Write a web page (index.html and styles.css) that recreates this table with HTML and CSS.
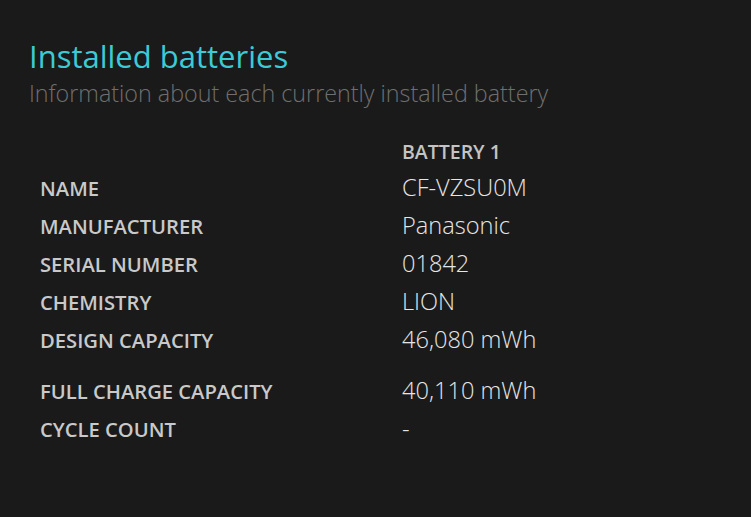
FILE: index.html
```html
<!DOCTYPE html>
<html>
<head>
<meta charset="utf-8">
<link rel="stylesheet" href="styles.css">
</head>
<body>
<div class="page">
  <h1 class="title">Installed batteries</h1>
  <p class="subtitle">Information about each currently installed battery</p>
  <div class="table">
    <div class="label">&nbsp;</div><div class="head">BATTERY 1</div>
    <div class="label">NAME</div><div class="value">CF-VZSU0M</div>
    <div class="label">MANUFACTURER</div><div class="value">Panasonic</div>
    <div class="label">SERIAL NUMBER</div><div class="value">01842</div>
    <div class="label">CHEMISTRY</div><div class="value">LION</div>
    <div class="label">DESIGN CAPACITY</div><div class="value">46,080 mWh</div>
    <div class="label gap">FULL CHARGE CAPACITY</div><div class="value gap">40,110 mWh</div>
    <div class="label">CYCLE COUNT</div><div class="value">-</div>
  </div>
</div>
</body>
</html>
```
FILE: styles.css
```css
html, body {
  margin: 0;
  padding: 0;
  background: #1a1a1a;
  height: 100%;
}
.page {
  padding: 37px 0 0 29px;
  font-family: "Open Sans", "Noto Sans", sans-serif;
}
.title {
  margin: 0;
  font-size: 31px;
  font-weight: 400;
  color: #3ccbd6;
  line-height: 38px;
}
.subtitle {
  margin: 3px 0 0 0;
  font-size: 23.3px;
  font-weight: 300;
  color: #6f6f6f;
  line-height: 30px;
}
.table {
  display: grid;
  grid-template-columns: 362px auto;
  grid-template-rows: 36px repeat(5, 38px) 51px 38px;
  margin: 24px 0 0 11px;
  align-items: baseline;
}
.label {
  font-size: 20.2px;
  font-weight: 600;
  color: #c9c9c9;
  line-height: 38px;
}
.head {
  font-size: 19.5px;
  font-weight: 600;
  color: #c4c4c4;
  line-height: 38px;
}
.value {
  font-size: 23.6px;
  font-weight: 300;
  color: #e6e6e6;
  line-height: 38px;
}
.gap {
  padding-top: 13px;
}
```
